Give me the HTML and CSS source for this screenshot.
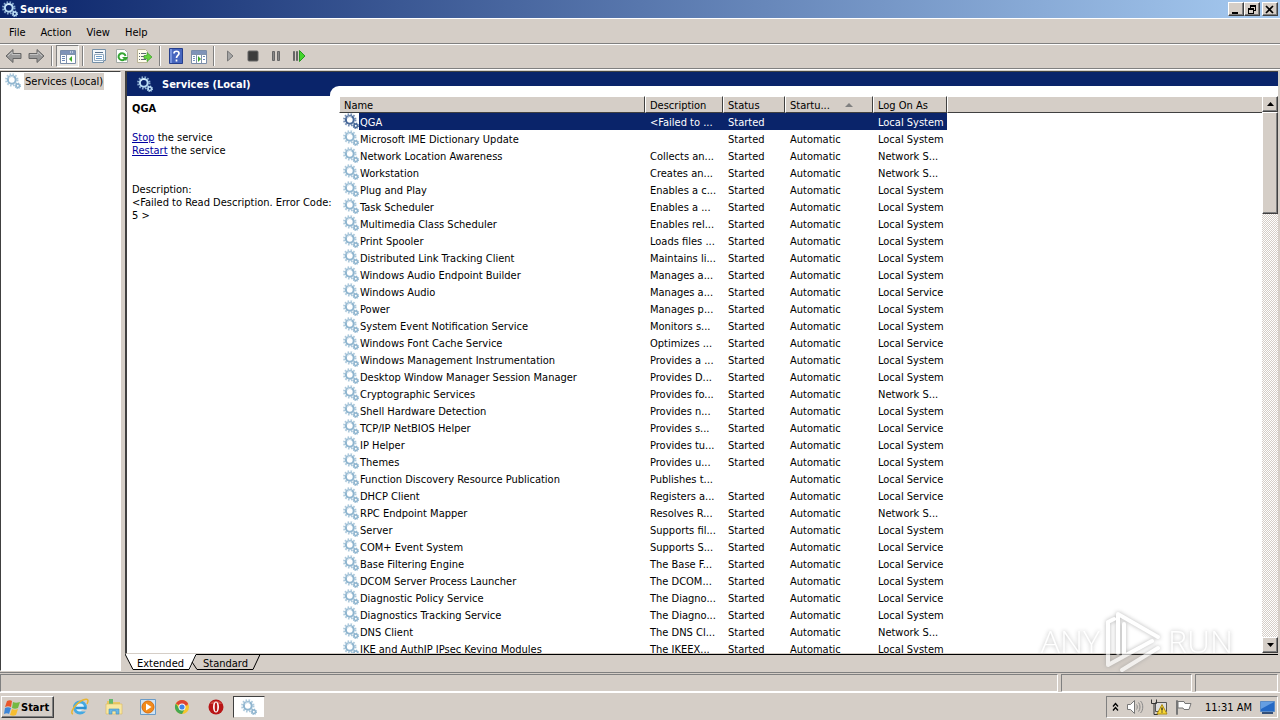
FILE: index.html
```html
<!DOCTYPE html>
<html lang="en">
<head>
  <meta charset="UTF-8" />
  <meta name="viewport" content="width=device-width, initial-scale=1.0" />
  <title>Services</title>
  <link rel="stylesheet" href="styles.css">
</head>
<body>
  <!-- shared gear icon -->
  <svg class="defs" width="0" height="0" aria-hidden="true">
    <symbol id="gear" viewBox="0 0 16 16">
      <circle cx="6.8" cy="6.8" r="5.7" fill="none" stroke="currentColor" stroke-width="2" stroke-dasharray="1.6 1.384" opacity=".75" />
      <circle cx="6.8" cy="6.8" r="3.9" fill="none" stroke="currentColor" stroke-width="2" />
      <path d="M3.700 5A3.700 3.700 0 0 1 8.500 3.500" fill="none" stroke="#fff" stroke-width=".9" opacity=".7" />
      <circle cx="12.800" cy="12.800" r="2.500" fill="none" stroke="currentColor" stroke-width="1.400" stroke-dasharray="1.1 .863" />
      <circle cx="12.800" cy="12.800" r="1.700" fill="none" stroke="currentColor" stroke-width="1.500" />
    </symbol>
  </svg>

  <div class="titlebar">
    <svg class="gear light"><use href="#gear" /></svg>
    <b>Services</b>
    <div class="window-btns">
      <button aria-label="Minimize"><svg width="10" height="9"><path d="M1 7h6v2H1z" /></svg></button>
      <button aria-label="Restore"><svg width="10" height="9"><path d="M3 0h6v6H7V5h1V2H4v1H3zM1 3h6v6H1zm1 2v3h4V5z" fill-rule="evenodd" /></svg></button>
      <button class="close" aria-label="Close"><svg width="10" height="9"><path d="M1 1l7 7M8 1L1 8" stroke="#000" stroke-width="1.7" /></svg></button>
    </div>
  </div>

  <div class="menubar">
    <button>File</button>
    <button>Action</button>
    <button>View</button>
    <button>Help</button>
  </div>

  <div class="toolbar">
    <button aria-label="Back"><svg width="17" height="16"><path d="M1 8l7-6.500v4h8v5H8v4z" fill="#999" stroke="#666" /><path d="M3 8l4-4v2.500h8" fill="none" stroke="#c2c2c2" /></svg></button>
    <button aria-label="Forward"><svg width="17" height="16"><path d="M16 8L9 1.500v4H1v5h8v4z" fill="#999" stroke="#666" /><path d="M2 6.500h8V4l4 4" fill="none" stroke="#c2c2c2" /></svg></button>
    <span class="sep"></span>
    <button class="pressed" aria-label="Show console tree"><svg width="16" height="15"><path d="M.5 1.500h15v13H.5z" fill="#fff" stroke="#7a8ca8" /><path d="M1 2h14v3H1z" fill="#7f93b8" /><path d="M10 3h1m1 0h1" stroke="#fff" /><path d="M2 7.500h3m-3 2h3m-3 2h3" stroke="#6a86b5" /><path d="M6.500 5v9M1 5.500h14" stroke="#8293ad" /><path d="M12 7v6L9 10z" fill="#3fa72d" /></svg></button>
    <span class="sep"></span>
    <button aria-label="Properties"><svg width="16" height="16"><path d="M1.500 1.500h13v11h-2v2h-11z" fill="#f4f8fb" stroke="#7590a8" /><path d="M4 4.500h8" stroke="#57728e" /><path d="M3.500 6.500h9v6h-9z" fill="#fff" stroke="#94abc0" /><path d="M5 8.500h6m-6 2h6" stroke="#6a9ac6" /></svg></button>
    <button aria-label="Refresh"><svg width="16" height="16"><path d="M2.500 1.500h8l3 3v10h-11z" fill="#fff" stroke="#a3aaa6" /><path d="M10.700 11A3.500 3.500 0 1 1 11.500 8" fill="none" stroke="#35a533" stroke-width="2" /><path d="M8 9h6l-2 4z" fill="#35a533" /></svg></button>
    <button aria-label="Export list"><svg width="17" height="16"><path d="M1.500 1.500h8l2 2v11h-10z" fill="#fffdee" stroke="#b9b396" /><path d="M3 5.500h1m1 0h5M3 8.500h1m1 0h4m-6 3h1m1 0h5" stroke="#5e6874" /><path d="M8 7.500h3v-3l5 4.500-5 4.500v-3H8z" fill="#65d43d" stroke="#3a9b2b" stroke-width=".7" /></svg></button>
    <span class="sep"></span>
    <button class="help" aria-label="Help"><svg width="14" height="16"><path d="M.5.500h13v15H.5z" fill="#4766be" stroke="#263f8d" /><path d="M1 1h2v14H1z" fill="#7894dd" /><path d="M5 5.500C5 2.500 10 2.500 10 5.500 10 7.500 7.500 7.500 7.500 10M7.500 11.500v2" fill="none" stroke="#fff" stroke-width="1.700" /></svg></button>
    <button aria-label="Show action pane"><svg width="16" height="15"><path d="M.5 1.500h15v13H.5z" fill="#fff" stroke="#7a8ca8" /><path d="M1 2h14v3H1z" fill="#7f93b8" /><path d="M2 7.500h2m-2 2h2m-2 2h2" stroke="#7794bd" /><path d="M5.500 5v9m5-9v9M1 5.500h14" stroke="#8293ad" /><path d="M7 7v6l3-3z" fill="#3fa72d" /><path d="M12 7.500h2m-2 3h2" stroke="#6a86b5" /></svg></button>
    <span class="sep"></span>
    <button aria-label="Start service"><svg width="14" height="14"><path d="M4.500 2v10L10 7z" fill="#a5a5a5" stroke="#777" /></svg></button>
    <button aria-label="Stop service"><svg width="12" height="12"><rect x="1" y="1" width="10" height="10" rx="1" fill="#3c3c3c" stroke="#666" /></svg></button>
    <button aria-label="Pause service"><svg width="12" height="14"><path d="M2.500 2.500h2v9h-2zm5 0h2v9h-2z" fill="#888" stroke="#666" /></svg></button>
    <button aria-label="Restart service"><svg width="14" height="14"><path d="M1.500 2.500h1v9h-1zm3 0h1v9h-1z" fill="#575" stroke="#666" /><path d="M7.500 1.500v11L13 7z" fill="#43d52c" stroke="#289722" /></svg></button>
  </div>

  <div class="console">
    <div class="tree">
      <svg class="gear"><use href="#gear" /></svg>
      <span>Services (Local)</span>
    </div>

    <div class="main">
      <div class="view">
        <div class="banner">
          <svg class="gear light"><use href="#gear" /></svg>
          <b>Services (Local)</b>
          <div class="curve"></div>
        </div>
        <div class="content">
          <div class="details">
            <h1>QGA</h1>
            <p><a href="#">Stop</a> the service<br><a href="#">Restart</a> the service</p>
            <p class="desc">Description:<br>&lt;Failed to Read Description. Error Code: 5 &gt;</p>
          </div>
          <div class="list">
            <table>
              <colgroup><col class="c-name"><col class="c-desc"><col class="c-status"><col class="c-startup"><col class="c-logon"><col></colgroup>
              <thead>
                <tr><th>Name</th><th>Description</th><th>Status</th><th>Startu... <i class="sort"></i></th><th>Log On As</th><th class="rest"></th></tr>
              </thead>
              <tbody>
                <tr class="selected"><td><svg class="gear"><use href="#gear" /></svg><span>QGA</span></td><td>&lt;Failed to ...</td><td>Started</td><td></td><td>Local System</td></tr>
                <tr><td><svg class="gear"><use href="#gear" /></svg><span>Microsoft IME Dictionary Update</span></td><td></td><td>Started</td><td>Automatic</td><td>Local System</td></tr>
                <tr><td><svg class="gear"><use href="#gear" /></svg><span>Network Location Awareness</span></td><td>Collects an...</td><td>Started</td><td>Automatic</td><td>Network S...</td></tr>
                <tr><td><svg class="gear"><use href="#gear" /></svg><span>Workstation</span></td><td>Creates an...</td><td>Started</td><td>Automatic</td><td>Network S...</td></tr>
                <tr><td><svg class="gear"><use href="#gear" /></svg><span>Plug and Play</span></td><td>Enables a c...</td><td>Started</td><td>Automatic</td><td>Local System</td></tr>
                <tr><td><svg class="gear"><use href="#gear" /></svg><span>Task Scheduler</span></td><td>Enables a ...</td><td>Started</td><td>Automatic</td><td>Local System</td></tr>
                <tr><td><svg class="gear"><use href="#gear" /></svg><span>Multimedia Class Scheduler</span></td><td>Enables rel...</td><td>Started</td><td>Automatic</td><td>Local System</td></tr>
                <tr><td><svg class="gear"><use href="#gear" /></svg><span>Print Spooler</span></td><td>Loads files ...</td><td>Started</td><td>Automatic</td><td>Local System</td></tr>
                <tr><td><svg class="gear"><use href="#gear" /></svg><span>Distributed Link Tracking Client</span></td><td>Maintains li...</td><td>Started</td><td>Automatic</td><td>Local System</td></tr>
                <tr><td><svg class="gear"><use href="#gear" /></svg><span>Windows Audio Endpoint Builder</span></td><td>Manages a...</td><td>Started</td><td>Automatic</td><td>Local System</td></tr>
                <tr><td><svg class="gear"><use href="#gear" /></svg><span>Windows Audio</span></td><td>Manages a...</td><td>Started</td><td>Automatic</td><td>Local Service</td></tr>
                <tr><td><svg class="gear"><use href="#gear" /></svg><span>Power</span></td><td>Manages p...</td><td>Started</td><td>Automatic</td><td>Local System</td></tr>
                <tr><td><svg class="gear"><use href="#gear" /></svg><span>System Event Notification Service</span></td><td>Monitors s...</td><td>Started</td><td>Automatic</td><td>Local System</td></tr>
                <tr><td><svg class="gear"><use href="#gear" /></svg><span>Windows Font Cache Service</span></td><td>Optimizes ...</td><td>Started</td><td>Automatic</td><td>Local Service</td></tr>
                <tr><td><svg class="gear"><use href="#gear" /></svg><span>Windows Management Instrumentation</span></td><td>Provides a ...</td><td>Started</td><td>Automatic</td><td>Local System</td></tr>
                <tr><td><svg class="gear"><use href="#gear" /></svg><span>Desktop Window Manager Session Manager</span></td><td>Provides D...</td><td>Started</td><td>Automatic</td><td>Local System</td></tr>
                <tr><td><svg class="gear"><use href="#gear" /></svg><span>Cryptographic Services</span></td><td>Provides fo...</td><td>Started</td><td>Automatic</td><td>Network S...</td></tr>
                <tr><td><svg class="gear"><use href="#gear" /></svg><span>Shell Hardware Detection</span></td><td>Provides n...</td><td>Started</td><td>Automatic</td><td>Local System</td></tr>
                <tr><td><svg class="gear"><use href="#gear" /></svg><span>TCP/IP NetBIOS Helper</span></td><td>Provides s...</td><td>Started</td><td>Automatic</td><td>Local Service</td></tr>
                <tr><td><svg class="gear"><use href="#gear" /></svg><span>IP Helper</span></td><td>Provides tu...</td><td>Started</td><td>Automatic</td><td>Local System</td></tr>
                <tr><td><svg class="gear"><use href="#gear" /></svg><span>Themes</span></td><td>Provides u...</td><td>Started</td><td>Automatic</td><td>Local System</td></tr>
                <tr><td><svg class="gear"><use href="#gear" /></svg><span>Function Discovery Resource Publication</span></td><td>Publishes t...</td><td></td><td>Automatic</td><td>Local Service</td></tr>
                <tr><td><svg class="gear"><use href="#gear" /></svg><span>DHCP Client</span></td><td>Registers a...</td><td>Started</td><td>Automatic</td><td>Local Service</td></tr>
                <tr><td><svg class="gear"><use href="#gear" /></svg><span>RPC Endpoint Mapper</span></td><td>Resolves R...</td><td>Started</td><td>Automatic</td><td>Network S...</td></tr>
                <tr><td><svg class="gear"><use href="#gear" /></svg><span>Server</span></td><td>Supports fil...</td><td>Started</td><td>Automatic</td><td>Local System</td></tr>
                <tr><td><svg class="gear"><use href="#gear" /></svg><span>COM+ Event System</span></td><td>Supports S...</td><td>Started</td><td>Automatic</td><td>Local Service</td></tr>
                <tr><td><svg class="gear"><use href="#gear" /></svg><span>Base Filtering Engine</span></td><td>The Base F...</td><td>Started</td><td>Automatic</td><td>Local Service</td></tr>
                <tr><td><svg class="gear"><use href="#gear" /></svg><span>DCOM Server Process Launcher</span></td><td>The DCOM...</td><td>Started</td><td>Automatic</td><td>Local System</td></tr>
                <tr><td><svg class="gear"><use href="#gear" /></svg><span>Diagnostic Policy Service</span></td><td>The Diagno...</td><td>Started</td><td>Automatic</td><td>Local Service</td></tr>
                <tr><td><svg class="gear"><use href="#gear" /></svg><span>Diagnostics Tracking Service</span></td><td>The Diagno...</td><td>Started</td><td>Automatic</td><td>Local System</td></tr>
                <tr><td><svg class="gear"><use href="#gear" /></svg><span>DNS Client</span></td><td>The DNS Cl...</td><td>Started</td><td>Automatic</td><td>Network S...</td></tr>
                <tr><td><svg class="gear"><use href="#gear" /></svg><span>IKE and AuthIP IPsec Keying Modules</span></td><td>The IKEEX...</td><td>Started</td><td>Automatic</td><td>Local System</td></tr>
              </tbody>
            </table>
          </div>
          <div class="scrollbar">
            <button aria-label="Scroll up"><svg width="7" height="4"><path d="M0 4h7L3.500 0z" /></svg></button>
            <div class="thumb"></div>
            <div class="track"></div>
            <button aria-label="Scroll down"><svg width="7" height="4"><path d="M0 0h7L3.500 4z" /></svg></button>
          </div>
        </div>
      </div>
      <div class="tabs">
        <svg width="140" height="17"><path d="M0 0l8 15.500h57L72 0z" fill="#fff" /><path d="M0 0l8 15.500h56L71 .5H140M67 8l5 7.500h56L135 .5" fill="none" stroke="#000" /></svg>
        <button class="active">Extended</button>
        <button>Standard</button>
      </div>
    </div>
  </div>

  <div class="statusbar"><span></span><span></span><span></span></div>

  <div class="taskbar">
    <button class="start">
      <svg width="17" height="17" viewBox="0 0 17 17"><path d="M3 2c2-1 4-1 5 0L7 8C5 7 3 7 1 8z" fill="#e9562b" /><path d="M9 3c2 1 4 1 7 0l-2 6c-2 1-4 1-6 0z" fill="#74b943" /><path d="M1 9c2-1 4-1 6 0l-2 6c-1-1-3-1-5 0z" fill="#3d86d8" /><path d="M8 10c2 1 4 1 6 0l-2 6c-2 1-4 1-6 0z" fill="#f6bd2e" /></svg>
      Start
    </button>
    <div class="launch">
      <button aria-label="Internet Explorer"><svg width="18" height="18"><circle cx="9" cy="9.500" r="5.500" fill="#dff3fd" stroke="#45a9e2" stroke-width="3" /><path d="M5 10h10" stroke="#2e92d2" stroke-width="2.500" /><path d="M10 11.500h7v2h-6z" fill="#d5cec7" /><path d="M2 16C-2 15 5 5 12 2c5-2 6 0 4 4" fill="none" stroke="#e8b532" stroke-width="1.500" /></svg></button>
      <button aria-label="Explorer"><svg width="18" height="18"><path d="M2 3h5l1 1h7v11H2z" fill="#e9c763" /><path d="M4 1h4v6H4z" fill="#65b96a" /><path d="M1 6h16v10H1z" fill="#f8e7a0" stroke="#dcb95c" stroke-width=".6" /><path d="M4 16v-5h10v5h-3v-3H7v3z" fill="#69b6e4" stroke="#428fc1" stroke-width=".6" /></svg></button>
      <button aria-label="Media Player"><svg width="18" height="18"><path d="M1.500 1.500h15v15h-15z" fill="#cfe3f4" stroke="#6a9bc7" /><circle cx="9" cy="9" r="6" fill="#f28b1c" stroke="#d96d0e" /><path d="M7 5.500v7L12.500 9z" fill="#fff" /></svg></button>
      <button aria-label="Chrome"><svg width="16" height="16"><circle cx="8" cy="8" r="7" fill="#f6c62e" /><path d="M8 8L1.900 4.500A7 7 0 0 1 14.100 4.500z" fill="#df4434" /><path d="M1.900 4.500A7 7 0 0 0 8 15l3-5.500H5z" fill="#46a852" /><path d="M8 4.500h6.100l-1 2H8z" fill="#df4434" /><circle cx="8" cy="8" r="3.500" fill="#fff" /><circle cx="8" cy="8" r="2.600" fill="#4386e8" /></svg></button>
      <button aria-label="Opera"><svg width="16" height="16"><circle cx="8" cy="8" r="7.500" fill="#b81516" /><path d="M2 5a6.500 5 0 0 1 12 0z" fill="#e36a61" opacity=".6" /><ellipse cx="8" cy="8" rx="3" ry="5.500" fill="#fff" /><ellipse cx="8" cy="8" rx="1.300" ry="4.500" fill="#b81516" /></svg></button>
      <button class="running" aria-label="Services"><svg class="gear"><use href="#gear" /></svg></button>
    </div>
    <div class="tray">
      <button aria-label="Show hidden icons"><svg width="7" height="10"><path d="M1 4.500l2.500-3 2.500 3M1 8.500l2.500-3 2.500 3" fill="none" stroke="#000" stroke-width="1.300" /></svg></button>
      <svg width="18" height="16"><path d="M1.500 5.500h3l4-4v13l-4-4h-3z" fill="#fff" stroke="#777" /><path d="M10.500 5.500c1 1 1 4 0 5M12.500 3.500c2 2 2 7 0 9M14.500 2c3 3 3 9 0 12" fill="none" stroke="#888" /></svg>
      <svg width="17" height="16"><path d="M4.500 3.500h11v9h-11z" fill="#ddd" stroke="#555" /><path d="M.5.500v4h5v-4m-2.500 4v11h4" fill="none" stroke="#333" /><path d="M11 5.500l5 9.500H6z" fill="#f9d837" stroke="#ae8c11" /><path d="M11 8.500v3m0 1v1" stroke="#222" stroke-width="1.300" /></svg>
      <svg width="17" height="16"><path d="M1.500 1.500h1v14h-1z" fill="#fff" stroke="#777" /><path d="M3 2.500h6l1 2h6l-2 6H9l-1-1.500H3z" fill="#fff" stroke="#777" /></svg>
      <time>11:31 AM</time>
      <svg width="15" height="13"><path d="M.5.500h14v10H.5z" fill="#2569c5" stroke="#5b8bc5" /><path d="M1 1h13L1 8z" fill="#659ee2" /><path d="M2 12h11" stroke="#344f78" stroke-width="2" /></svg>
    </div>
  </div>

  <div class="watermark">
    <span>ANY</span>
    <svg width="60" height="66" viewBox="0 0 60 66"><path d="M14 45V6L54 29M18 62L54 40M4 14v43L46 34M4 14l6-3M20 16v32l28-15" fill="none" stroke="#fff" stroke-width="4" stroke-linejoin="round" stroke-linecap="round" /></svg>
    <span>RUN</span>
  </div>
</body>
</html>
```

FILE: styles.css
```css
* {
  box-sizing: border-box;
}

body {
  margin: 0;
  height: 100vh;
  display: flex;
  flex-direction: column;
  overflow: hidden;
  background-color: #d5cec7;
  color: #000;
  font-family: "DejaVu Sans Condensed", "Noto Sans", sans-serif;
  font-size: 11px;
  line-height: 13px;
}

button {
  font: inherit;
  color: inherit;
  background: none;
  border: none;
  padding: 0;
}

svg {
  display: block;
  flex-shrink: 0;
}

.defs {
  position: absolute;
}

.gear {
  width: 16px;
  height: 16px;
  color: #8fb5cf;
}

.gear.light {
  color: #b9dcf4;
}

.titlebar {
  height: 18px;
  flex-shrink: 0;
  display: flex;
  align-items: center;
  gap: 2px;
  padding: 0 2px;
  color: #fff;
  background: linear-gradient(to right, #0a246a, #a6caf0);
}

.window-btns {
  display: flex;
  margin-left: auto;
}

.window-btns button,
.scrollbar button,
.thumb,
.start {
  background-color: #d5cec7;
  border: 1px solid;
  border-color: #fff #404040 #404040 #fff;
  box-shadow: inset -1px -1px #808080;
}

.window-btns button {
  width: 16px;
  height: 14px;
  display: flex;
  align-items: center;
  justify-content: center;
}

.window-btns .close {
  margin-left: 2px;
}

.menubar {
  height: 26px;
  flex-shrink: 0;
  display: flex;
  align-items: center;
  gap: 15px;
  padding: 2px 9px 0;
  border-top: 1px solid #fff;
  border-bottom: 1px solid #808080;
}

.toolbar {
  height: 25px;
  flex-shrink: 0;
  display: flex;
  align-items: center;
  padding: 0 0 1px 2px;
  border-top: 1px solid #fff;
  border-bottom: 1px solid #808080;
}

.toolbar button {
  width: 23px;
  height: 22px;
  display: flex;
  align-items: center;
  justify-content: center;
}

.toolbar .pressed {
  background-color: #ebe8e3;
  border: 1px solid;
  border-color: #808080 #fff #fff #808080;
}

.sep {
  width: 2px;
  height: 20px;
  margin: 0 3px;
  border-left: 1px solid #808080;
  border-right: 1px solid #fff;
}

.console {
  flex: 1;
  min-height: 0;
  display: flex;
  gap: 4px;
  padding: 1px 2px 1px 0;
  border-top: 1px solid #fff;
}

.tree {
  width: 121px;
  display: flex;
  align-items: flex-start;
  padding: 1px 4px;
  gap: 3px;
  background-color: #fff;
  border: 1px solid;
  border-color: #404040 #fff #fff #404040;
}

.tree span {
  padding: 2px 1px;
  background-color: #d5cec7;
  white-space: nowrap;
}

.main {
  flex: 1;
  min-width: 0;
  display: flex;
  flex-direction: column;
}

.view {
  flex: 1;
  min-height: 0;
  display: flex;
  flex-direction: column;
  background-color: #fff;
  border-top: 1px solid #404040;
  border-left: 2px solid #404040;
  border-bottom: 1px solid #d5cec7;
}

.banner {
  height: 24px;
  flex-shrink: 0;
  display: flex;
  align-items: center;
  padding-left: 10px;
  gap: 9px;
  color: #fff;
  background-color: #0a246a;
}

.banner b {
  width: 159px;
}

.curve {
  flex: 1;
  height: 10px;
  align-self: flex-end;
  background-color: #fff;
  border-top-left-radius: 9px;
}

.content {
  flex: 1;
  min-height: 0;
  display: flex;
}

.details {
  width: 212px;
  flex-shrink: 0;
  padding: 6px 0 0 5px;
}

.details h1 {
  margin: 0;
  font-size: 11px;
}

.details p {
  margin: 16px 0 0;
}

.details .desc {
  margin-top: 26px;
}

.details a {
  color: #0000a0;
}

.list {
  flex: 1;
  min-width: 0;
  overflow: hidden;
}

.list table {
  width: 100%;
  table-layout: fixed;
  border-collapse: separate;
  border-spacing: 0;
}

.c-name {
  width: 306px;
}

.c-desc {
  width: 78px;
}

.c-status {
  width: 62px;
}

.c-startup {
  width: 88px;
}

.c-logon {
  width: 74px;
}

.list th {
  height: 17px;
  padding: 1px 4px 0;
  text-align: left;
  font-weight: normal;
  white-space: nowrap;
  background-color: #d5cec7;
  border: 1px solid;
  border-color: #fff #404040 #404040 #fff;
}

.list th.rest {
  border-right: none;
}

.sort {
  display: inline-block;
  margin: 0 0 2px 12px;
  border: 4px solid transparent;
  border-top: none;
  border-bottom-color: #808080;
}

.list td {
  height: 17px;
  padding: 2px 5px 0;
  line-height: 15px;
  white-space: nowrap;
}

.list td:first-child {
  display: flex;
  padding: 0 0 0 4px;
}

.list td:first-child span {
  flex: 1;
  padding: 2px 0 0 1px;
}

.selected td:not(:first-child),
.selected td:first-child span {
  color: #fff;
  background-color: #0a246a;
}

.selected .gear {
  color: #466798;
}

.scrollbar {
  width: 16px;
  display: flex;
  flex-direction: column;
}

.scrollbar button {
  height: 16px;
  display: flex;
  align-items: center;
  justify-content: center;
}

.thumb {
  height: 102px;
}

.track {
  flex: 1;
  background: repeating-conic-gradient(#d5cec7 0 25%, #fff 0 50%) 0 0 / 2px 2px;
}

.tabs {
  height: 17px;
  flex-shrink: 0;
  display: flex;
  position: relative;
  padding-left: 12px;
  gap: 19px;
  border-top: 1px solid #000;
}

/* slanted outline behind the tab labels */
.tabs svg {
  position: absolute;
  left: 0;
  top: -1px;
}

.tabs button {
  position: relative;
}

.statusbar {
  height: 20px;
  flex-shrink: 0;
  display: flex;
  gap: 3px;
  padding: 1px 2px 0 0;
  border-top: 1px solid #808080;
}

.statusbar span {
  width: 131px;
  border: 1px solid;
  border-color: #808080 #fff #fff #808080;
}

.statusbar span:first-child {
  flex: 1;
}

.statusbar span:last-child {
  width: 83px;
}

.taskbar {
  height: 28px;
  flex-shrink: 0;
  display: flex;
  align-items: center;
  padding: 1px 2px 0 1px;
  border-top: 1px solid #fff;
}

.start {
  width: 53px;
  height: 22px;
  display: flex;
  align-items: center;
  padding-left: 2px;
  font-weight: bold;
}

.launch {
  display: flex;
  padding-left: 9px;
}

.launch button {
  width: 34px;
  height: 22px;
  display: flex;
  align-items: center;
  justify-content: center;
}

.launch .running {
  width: 32px;
  background-color: #fff;
  border: 1px solid;
  border-color: #404040 #d5cec7 #d5cec7 #404040;
}

.tray {
  height: 22px;
  margin-left: auto;
  display: flex;
  align-items: center;
  gap: 7px;
  padding: 0 2px 0 5px;
  border: 1px solid;
  border-color: #808080 #fff #fff #808080;
}

.tray time {
  padding: 0 1px 0 6px;
}

.watermark {
  position: absolute;
  right: 47px;
  bottom: 46px;
  display: flex;
  align-items: center;
  gap: 4px;
  color: #fff;
  font-family: "Open Sans", sans-serif;
  font-size: 32px;
  font-weight: 300;
  line-height: 40px;
  opacity: 0.7;
  filter: drop-shadow(0 0 2px #999);
  pointer-events: none;
}
```
